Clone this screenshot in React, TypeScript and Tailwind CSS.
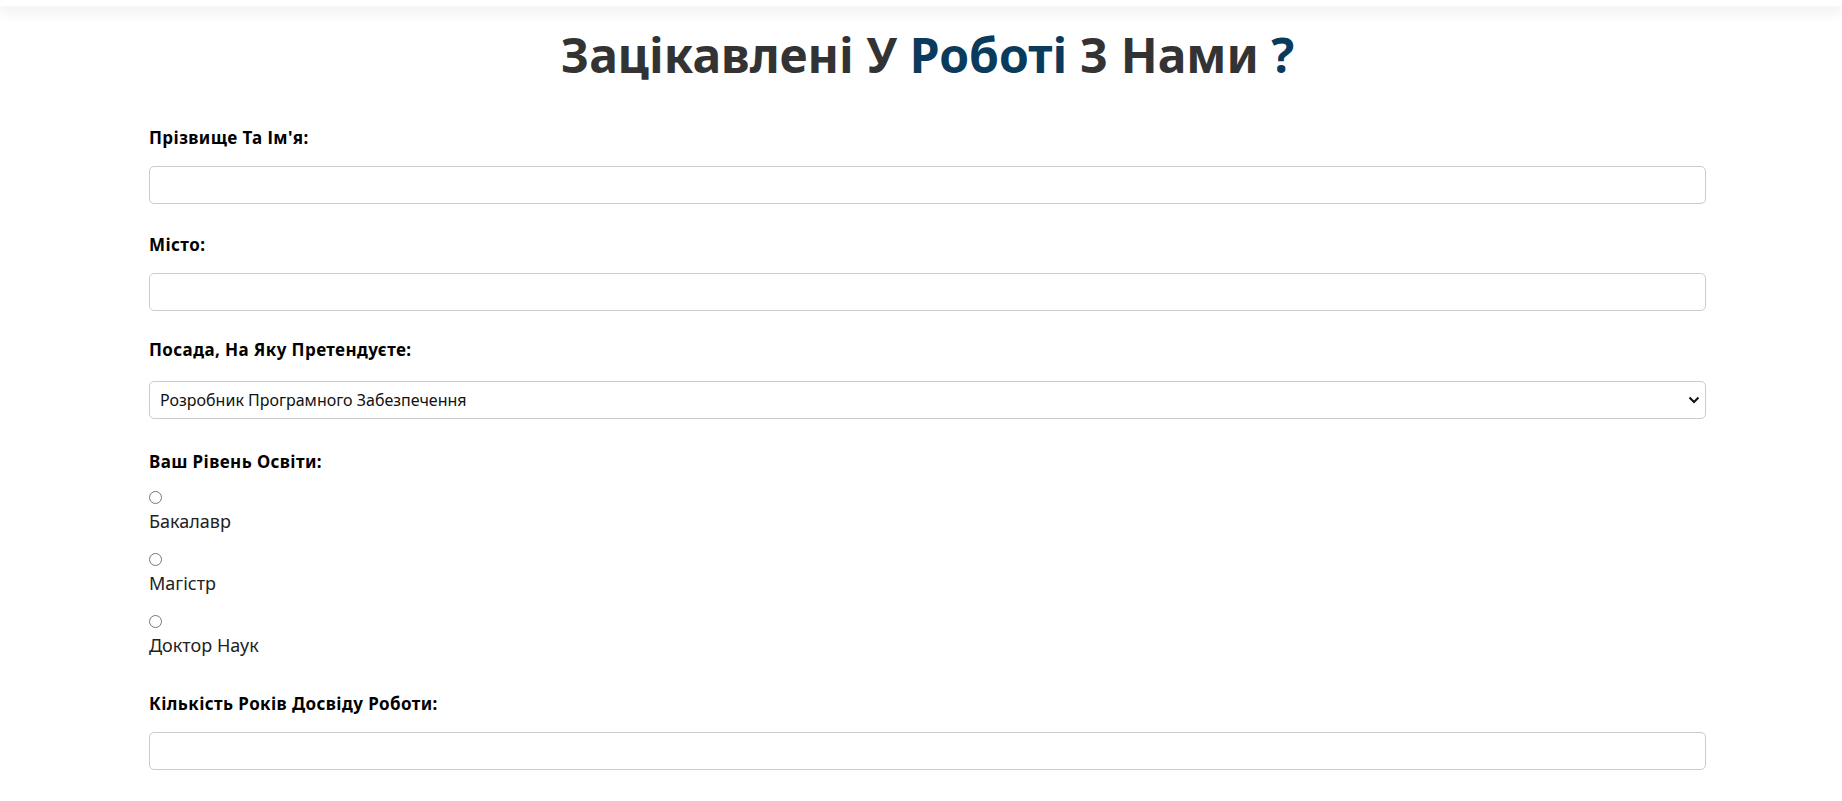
import React from "react";

const font = { fontFamily: '"Noto Sans", "Open Sans", Arial, sans-serif' };

function Field({ label, className, children }: { label: string; className?: string; children: React.ReactNode }) {
  return (
    <div className={className}>
      <label className="block text-[17px] leading-[24px] font-bold tracking-[0.4px] text-black">{label}</label>
      {children}
    </div>
  );
}

export default function App() {
  return (
    <div className="min-h-[801px] bg-white" style={font}>
      <div className="h-[6px] bg-white shadow-[0_4px_14px_rgba(0,0,0,0.12)]" />
      <div className="pl-[149px] pr-[136px] pb-[40px]">
        <h1 className="mt-[19px] text-center text-[48px] leading-[60px] font-bold text-[#333333]">
          Зацікавлені У <span className="text-[#0a3a5c]">Роботі</span> З Нами <span className="text-[#0a3a5c]">?</span>
        </h1>
        <form className="flex flex-col">
          <Field label="Прізвище Та Ім'я:" className="mt-[41px]">
            <input type="text" className="mt-[16px] block h-[38px] w-full rounded-[5px] border border-[#cccccc] px-3 text-[16px] outline-none" />
          </Field>
          <Field label="Місто:" className="mt-[29px]">
            <input type="text" className="mt-[16px] block h-[38px] w-full rounded-[5px] border border-[#cccccc] px-3 text-[16px] outline-none" />
          </Field>
          <Field label="Посада, На Яку Претендуєте:" className="mt-[27px]">
            <div className="relative mt-[19px]">
              <select className="block h-[38px] w-full appearance-none rounded-[5px] border border-[#cccccc] bg-white pl-[10px] text-[16px] text-[#111] outline-none">
                <option>Розробник Програмного Забезпечення</option>
                <option>Дизайнер</option>
                <option>Менеджер Проєктів</option>
              </select>
              <svg className="pointer-events-none absolute right-[6px] top-[15px]" width="12" height="8" viewBox="0 0 12 8">
                <path d="M1.5 1.5 L6 6 L10.5 1.5" fill="none" stroke="#111" strokeWidth="2" />
              </svg>
            </div>
          </Field>
          <Field label="Ваш Рівень Освіти:" className="mt-[31px]">
            <div className="mt-[17px] flex flex-col gap-[18px]">
              {["Бакалавр", "Магістр", "Доктор Наук"].map((t) => (
                <label key={t} className="flex flex-col items-start">
                  <input type="radio" name="edu" className="m-0 h-[13px] w-[13px]" />
                  <span className="mt-[4px] text-[18px] leading-[27px] text-[#222]">{t}</span>
                </label>
              ))}
            </div>
          </Field>
          <Field label="Кількість Років Досвіду Роботи:" className="mt-[33px]">
            <input type="number" className="mt-[16px] block h-[38px] w-full rounded-[5px] border border-[#cccccc] px-3 text-[16px] outline-none" />
          </Field>
        </form>
      </div>
    </div>
  );
}
